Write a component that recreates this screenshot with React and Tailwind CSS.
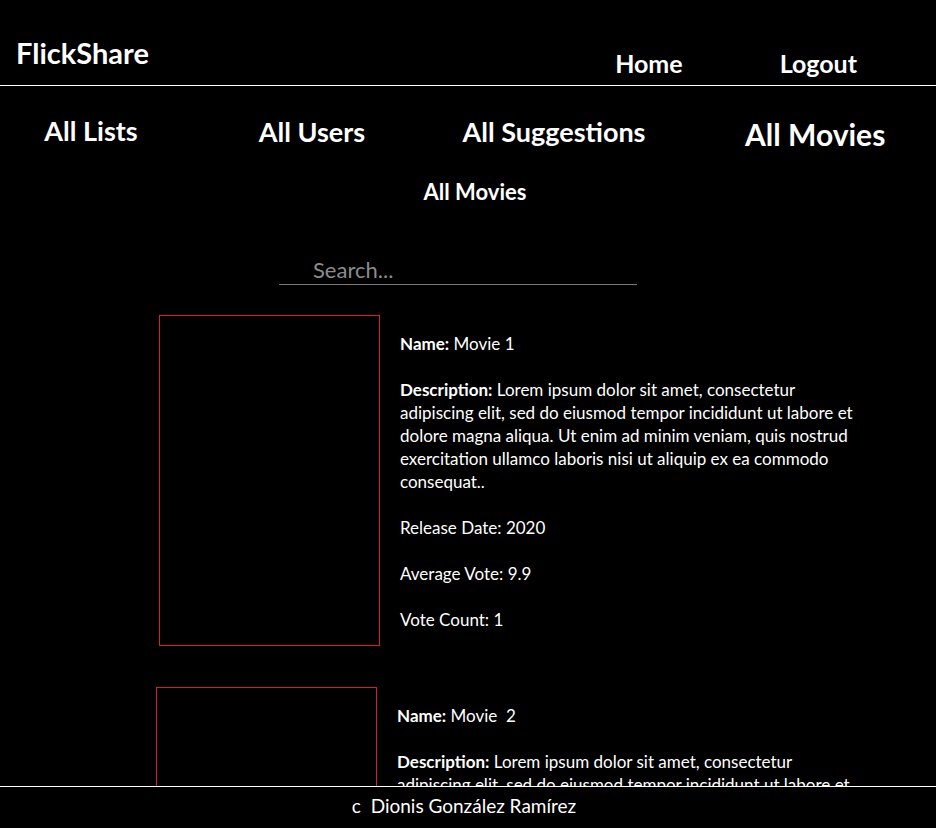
import React from 'react';

const LOREM =
  'Lorem ipsum dolor sit amet, consectetur adipiscing elit, sed do eiusmod tempor incididunt ut labore et dolore magna aliqua. Ut enim ad minim veniam, quis nostrud exercitation ullamco laboris nisi ut aliquip ex ea commodo consequat..';

const movies = [
  { name: 'Movie 1', year: 2020, avg: '9.9', count: 1, shift: '' },
  { name: 'Movie  2', year: 2020, avg: '9.9', count: 1, shift: '-ml-[3px]' },
  { name: 'Movie 3', year: 2020, avg: '9.9', count: 1, shift: '' },
];

function MovieCard({ movie }) {
  return (
    <div className={`flex ${movie.shift}`}>
      <div className="w-[221px] h-[331px] shrink-0 border border-[#d3212b]" />
      <div className="ml-[20px] w-[472px] pt-[17px] text-[17px] leading-[23px] text-white whitespace-pre-wrap">
        <p>
          <b>Name:</b> {movie.name}
        </p>
        <p className="mt-[23px]">
          <b>Description:</b> {LOREM}
        </p>
        <p className="mt-[23px]">Release Date: {movie.year}</p>
        <p className="mt-[23px]">Average Vote: {movie.avg}</p>
        <p className="mt-[23px]">Vote Count: {movie.count}</p>
      </div>
    </div>
  );
}

export default function App() {
  return (
    <div
      className="min-h-screen bg-black text-white pb-[60px]"
      style={{ fontFamily: 'Lato, "Open Sans", sans-serif' }}
    >
      {/* Header */}
      <header className="h-[86px] border-b border-white flex items-start justify-between">
        <div className="pl-[16px] pt-[35px] text-[29px] font-bold leading-[36px]">FlickShare</div>
        <nav className="flex pt-[47px] text-[25px] font-bold leading-[32px]">
          <a className="mr-[97px]">Home</a>
          <a className="mr-[79px]">Logout</a>
        </nav>
      </header>

      {/* Section nav */}
      <div className="grid grid-cols-[182px_260px_224px_270px] font-bold text-[27px] leading-[34px] mt-[28px]">
        <div className="text-center">All Lists</div>
        <div className="text-center pt-[1px]">All Users</div>
        <div className="text-center pt-[1px]">All Suggestions</div>
        <div className="pl-[79px] text-[30px] leading-[36px] pt-[2px]">All Movies</div>
      </div>

      <h2 className="text-center text-[22px] font-bold leading-[28px] mt-[26px] translate-x-[7px]">
        All Movies
      </h2>

      {/* Search */}
      <div className="ml-[279px] mt-[50px] w-[358px] border-b border-[#7a7a7a] pl-[34px]">
        <input
          className="w-full bg-transparent outline-none text-[22px] leading-[28px] placeholder:text-[#8c8c8c] text-white"
          placeholder="Search..."
        />
      </div>

      {/* Movies */}
      <div className="ml-[159px] mt-[30px] flex flex-col gap-[41px]">
        {movies.map((m) => (
          <MovieCard key={m.name} movie={m} />
        ))}
      </div>

      {/* Footer */}
      <footer className="fixed bottom-0 left-0 right-0 h-[42px] bg-black border-t border-white flex items-center justify-center pb-[3px]">
        <span className="text-[19px] leading-[24px] pr-[8px]">c&nbsp; Dionis González Ramírez</span>
      </footer>
    </div>
  );
}
